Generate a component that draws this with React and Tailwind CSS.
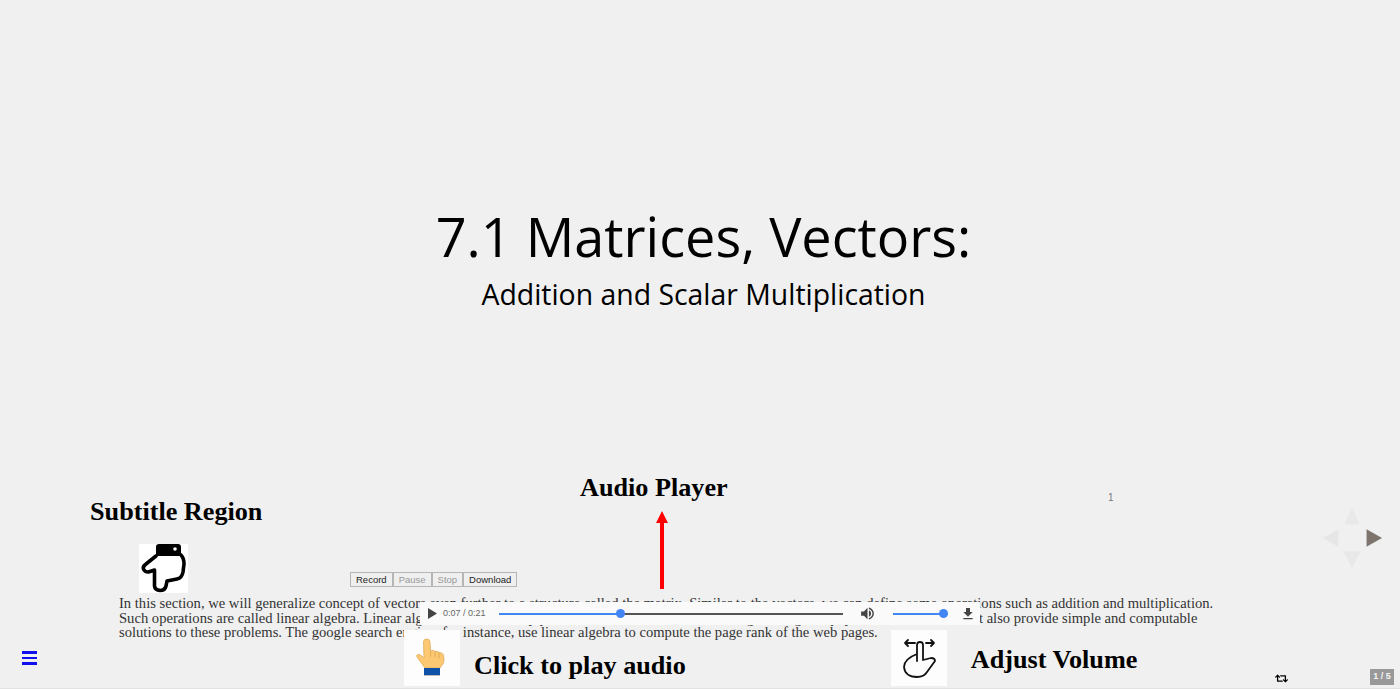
import { useState } from 'react';
import { FaRetweet } from 'react-icons/fa';

const serif = { fontFamily: '"Liberation Serif", serif' };
const sans = { fontFamily: '"Liberation Sans", sans-serif' };

const HandDown = () => (
  <svg viewBox="0 0 49 49" className="w-[49px] h-[49px]">
    <path d="M17 12 L7 20 Q3 23 5 26 Q7 29 11 27.500 L15.500 26 V42 Q16 46 21 46.500 Q26 46.500 27 42 L28 37 L38 35 Q43 34 44 28 L45 20 Q45 14 42 11" fill="#fff" stroke="#000" strokeWidth="3.600" strokeLinejoin="round" strokeLinecap="round" />
    <path d="M20 0H39Q42 0 42 3V12H17V3Q17 0 20 0z" fill="#000" />
    <circle cx="36" cy="5" r="1.800" fill="#fff" />
  </svg>
);

const HandUp = () => (
  <svg viewBox="0 0 56 56" className="w-[56px] h-[56px]">
    <path d="M19.500 12Q19.500 9 22.500 9Q26 9 26 12L26.500 21Q29 19.500 31 21.500Q33.500 20.500 35 22.500Q38 22 39.500 25Q40.500 30 39.500 33L36 38H21L13 27Q12 25 14 24.500Q16.500 24 20 28z" fill="#fcc972" stroke="#e0ab5a" strokeWidth="0.800" />
    <path d="M26.500 21v6M31 21.500v6M35 22.500v6" stroke="#dca553" strokeWidth="0.800" fill="none" />
    <rect x="20" y="38" width="16" height="7" fill="#0d52a8" />
    <rect x="20" y="45" width="16" height="1" fill="#bbb" />
  </svg>
);

const HandSwipe = () => (
  <svg viewBox="0 0 56 56" className="w-[56px] h-[56px]" fill="none" stroke="#111" strokeWidth="1.800" strokeLinecap="round" strokeLinejoin="round">
    <path d="M14 13H24M14 13l3-3M14 13l3 3M35 13H43M43 13l-3-3M43 13l-3 3" />
    <path d="M26 31V15Q26 12 29 12Q32 12 32 15V30L40 28Q44 28 44 31L36 42Q33 47 26 47Q14 47 13 37Q13 29 26 24" />
  </svg>
);

const RecorderButton = ({ children, muted }) => (
  <button className={`h-[15px] px-[5px] border border-[#b5b5b5] bg-[#efefef] text-[9.500px] leading-none ${muted ? 'text-[#999]' : 'text-[#222]'}`}>
    {children}
  </button>
);

const AudioPlayer = () => (
  <div className="absolute left-[420px] top-[602px] w-[560px] h-[23px] bg-[#fafafa] flex items-center pl-[8px] text-[#555]" style={sans}>
    <svg viewBox="0 0 10 12" className="w-[9px] h-[11px] shrink-0"><path d="M0 0l10 6-10 6z" fill="#444" /></svg>
    <span className="ml-[6px] w-[42px] text-[9px] whitespace-nowrap text-[#666]">0:07 / 0:21</span>
    <div className="ml-[14px] w-[344px] h-[2px] bg-[#555] relative shrink-0">
      <div className="absolute left-0 top-0 h-full w-[122px] bg-[#4285f4]" />
      <div className="absolute left-[117px] top-[-3.500px] w-[9px] h-[9px] rounded-full bg-[#4285f4]" />
    </div>
    <svg viewBox="0 0 24 24" className="ml-[16px] w-[17px] h-[17px] shrink-0" fill="#444">
      <path d="M3 9v6h4l5 5V4L7 9H3z" />
      <path d="M14 7.500v9c1.800-.8 3-2.500 3-4.500s-1.200-3.700-3-4.500z" />
      <path d="M14 3.500v2c2.900.9 5 3.500 5 6.500s-2.100 5.600-5 6.500v2c4-.9 7-4.500 7-8.500s-3-7.600-7-8.500z" />
    </svg>
    <div className="ml-[17px] w-[55px] h-[2px] bg-[#4285f4] relative shrink-0">
      <div className="absolute right-0 top-[-3.500px] w-[9px] h-[9px] rounded-full bg-[#4285f4]" />
    </div>
    <svg viewBox="0 0 24 24" className="ml-[12px] w-[16px] h-[16px] shrink-0" fill="#444">
      <path d="M19 9h-4V3H9v6H5l7 7 7-7zM5 18v2h14v-2H5z" />
    </svg>
  </div>
);

const Label = ({ children }) => (
  <div className="text-[26.200px] leading-[30px] font-bold text-black whitespace-nowrap" style={serif}>{children}</div>
);

const App = () => {
  const [slide] = useState(1);
  return (
    <div className="relative w-[1400px] h-[689px] overflow-hidden bg-[#f0f0f0] border-b border-[#e2e2e2]">
      <div className="flex flex-col items-center pt-[200px] pl-[7px] text-black" style={{ fontFamily: '"Open Sans", sans-serif' }}>
        <h1 className="text-[54px] leading-[72px] font-normal whitespace-nowrap">7.1 Matrices, Vectors:</h1>
        <h2 className="mt-[3px] text-[28.400px] leading-[38px] font-normal whitespace-nowrap">Addition and Scalar Multiplication</h2>
      </div>

      <p className="mt-[283px] ml-[119px] w-[1120px] text-[14.600px] leading-[14.500px] text-[#333]" style={serif}>
        In this section, we will generalize concept of vectors even further to a structure called the matrix. Similar to the vectors, we can define some operations such as addition and multiplication.<br />
        Such operations are called linear algebra. Linear algebra arises in many problems in the real world, from engineering and physics to statistics, and it also provide simple and computable<br />
        solutions to these problems. The google search engine, for instance, use linear algebra to compute the page rank of the web pages.
      </p>

      <span className="absolute left-[1108px] top-[490px] text-[10px] text-[#777]" style={sans}>1</span>

      <div className="absolute left-[350px] top-[572px] flex" style={sans}>
        <RecorderButton>Record</RecorderButton>
        <RecorderButton muted>Pause</RecorderButton>
        <RecorderButton muted>Stop</RecorderButton>
        <RecorderButton>Download</RecorderButton>
      </div>

      <AudioPlayer />

      <div className="absolute left-[90px] top-[497px] flex flex-col">
        <Label>Subtitle Region</Label>
        <div className="mt-[17px] ml-[49px] w-[49px] bg-white"><HandDown /></div>
      </div>

      <div className="absolute left-[580px] top-[473px] flex flex-col">
        <Label>Audio Player</Label>
        <svg viewBox="0 0 14 78" className="mt-[8px] ml-[75px] w-[14px] h-[78px]">
          <path d="M5 12h4v66H5z M7 0l6 12H1z" fill="#f00" />
        </svg>
      </div>

      <div className="absolute left-[404px] top-[630px] flex">
        <div className="bg-[#fdfdfd]"><HandUp /></div>
        <div className="ml-[14px] mt-[21px]"><Label>Click to play audio</Label></div>
        <div className="ml-[205px] bg-[#fdfdfd]"><HandSwipe /></div>
        <div className="ml-[24px] mt-[15px]"><Label>Adjust Volume</Label></div>
      </div>

      <div className="absolute left-[22px] top-[651px] w-[15px] flex flex-col gap-[3px]">
        <div className="h-[2.500px] bg-[#1010ee]" />
        <div className="h-[2.500px] bg-[#1010ee]" />
        <div className="h-[2.500px] bg-[#1010ee]" />
      </div>

      <svg viewBox="0 0 60 64" className="absolute left-[1322px] top-[508px] w-[60px] h-[62px]">
        <path d="M30 0l8 17H22z" fill="#e8e8e8" />
        <path d="M30 62l-9-17h18z" fill="#e8e8e8" />
        <path d="M0 31l16-9v18z" fill="#e6e6e6" />
        <path d="M45 22l16 9-16 9z" fill="#7d756d" />
      </svg>

      <FaRetweet className="absolute left-[1275px] top-[672px] w-[13px] h-[13px] text-black" />

      <div className="absolute left-[1370px] top-[669px] w-[24px] h-[16px] bg-[#999] text-[#f5f5f5] text-[9px] font-bold flex items-center justify-center" style={sans}>
        {slide} / 5
      </div>
    </div>
  );
};

export default App;
